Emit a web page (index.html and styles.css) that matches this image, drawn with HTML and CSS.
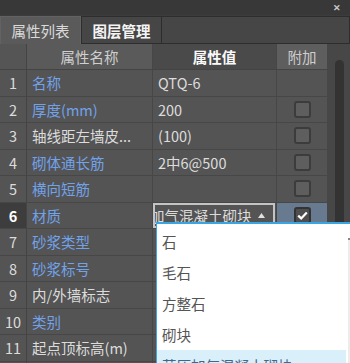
FILE: index.html
```html
<!DOCTYPE html>
<html lang="zh-CN">
<head>
    <meta charset="UTF-8">
    <title>属性列表</title>
    <link rel="stylesheet" href="styles.css">
</head>
<body>
    <div class="panel">
        <div class="titlebar">
            <span class="close">✕</span>
        </div>

        <div class="tabs">
            <div class="tab active">属性列表</div>
            <div class="tab">图层管理</div>
            <div class="tab-rest"></div>
        </div>

        <div class="body">
            <div class="grid">
                <div class="row head">
                    <div class="cell num"></div>
                    <div class="cell name">属性名称</div>
                    <div class="cell value">属性值</div>
                    <div class="cell add">附加</div>
                </div>
                <div class="row">
                    <div class="cell num">1</div>
                    <div class="cell name link">名称</div>
                    <div class="cell value">QTQ-6</div>
                    <div class="cell add"></div>
                </div>
                <div class="row">
                    <div class="cell num">2</div>
                    <div class="cell name link">厚度(mm)</div>
                    <div class="cell value">200</div>
                    <div class="cell add"><span class="check"></span></div>
                </div>
                <div class="row">
                    <div class="cell num">3</div>
                    <div class="cell name">轴线距左墙皮...</div>
                    <div class="cell value">(100)</div>
                    <div class="cell add"><span class="check"></span></div>
                </div>
                <div class="row">
                    <div class="cell num">4</div>
                    <div class="cell name link">砌体通长筋</div>
                    <div class="cell value">2中6@500</div>
                    <div class="cell add"><span class="check"></span></div>
                </div>
                <div class="row">
                    <div class="cell num">5</div>
                    <div class="cell name link">横向短筋</div>
                    <div class="cell value"></div>
                    <div class="cell add"><span class="check"></span></div>
                </div>
                <div class="row current">
                    <div class="cell num">6</div>
                    <div class="cell name link">材质</div>
                    <div class="cell value">
                        <div class="combo">
                            <span class="combo-text">蒸压加气混凝土砌块</span>
                            <svg class="combo-arrow" width="7" height="5" viewBox="0 0 7 5"><path d="M0 5 L3.5 0 L7 5 Z" fill="#e0e0e0"/></svg>
                        </div>
                    </div>
                    <div class="cell add selected">
                        <span class="check on">
                            <svg width="11" height="9" viewBox="0 0 11 9"><path d="M1.2 4.6 L4.2 7.4 L9.8 1.4" fill="none" stroke="#fff" stroke-width="2.2"/></svg>
                        </span>
                    </div>
                </div>
                <div class="row">
                    <div class="cell num">7</div>
                    <div class="cell name link">砂浆类型</div>
                    <div class="cell value"></div>
                    <div class="cell add"></div>
                </div>
                <div class="row">
                    <div class="cell num">8</div>
                    <div class="cell name link">砂浆标号</div>
                    <div class="cell value"></div>
                    <div class="cell add"></div>
                </div>
                <div class="row">
                    <div class="cell num">9</div>
                    <div class="cell name">内/外墙标志</div>
                    <div class="cell value"></div>
                    <div class="cell add"></div>
                </div>
                <div class="row">
                    <div class="cell num">10</div>
                    <div class="cell name link">类别</div>
                    <div class="cell value"></div>
                    <div class="cell add"></div>
                </div>
                <div class="row">
                    <div class="cell num">11</div>
                    <div class="cell name">起点顶标高(m)</div>
                    <div class="cell value"></div>
                    <div class="cell add"></div>
                </div>
                <div class="row">
                    <div class="cell num"></div>
                    <div class="cell name"></div>
                    <div class="cell value"></div>
                    <div class="cell add"></div>
                </div>
            </div>
            <div class="vscroll">
                <div class="thumb"></div>
            </div>

            <!-- dropdown list of the combo in row 6 -->
            <div class="popup">
                <ul class="options">
                    <li>石</li>
                    <li>毛石</li>
                    <li>方整石</li>
                    <li>砌块</li>
                    <li class="hover">蒸压加气混凝土砌块</li>
                </ul>
                <div class="popup-scroll"></div>
            </div>
        </div>
    </div>
</body>
</html>
```

FILE: styles.css
```css
body {
    margin: 0;
    width: 350px;
    height: 363px;
    overflow: hidden;
    background-color: #545454;
    font-family: 'Noto Sans CJK SC', 'Noto Sans', sans-serif;
    font-size: 14.5px;
    color: #dcdcdc;
}
.panel {
    width: 350px;
    height: 363px;
    display: flex;
    flex-direction: column;
}
.titlebar {
    height: 15px;
    background-color: #383838;
    display: flex;
    justify-content: flex-end;
    align-items: center;
    padding-right: 9px;
}
.close {
    font-size: 9px;
    font-weight: bold;
    color: #c8c8c8;
    line-height: 9px;
}
.tabs {
    height: 29px;
    display: flex;
    background-color: #3c3c3c;
    box-sizing: border-box;
    padding-top: 1px;
}
.tab {
    width: 81px;
    box-sizing: border-box;
    display: flex;
    align-items: center;
    justify-content: center;
    background-color: #464646;
    border: 1px solid #2d2d2d;
    color: #f4f4f4;
    font-weight: bold;
    font-size: 14.5px;
}
.tab.active {
    background-color: #5a5a5a;
    border-color: #626262;
    border-bottom: none;
    color: #dadada;
    font-weight: normal;
}
.tab-rest {
    flex: 1;
    background-color: #464646;
    border: 1px solid #2d2d2d;
    border-left: none;
}
.body {
    flex: 1;
    display: flex;
    position: relative;
    overflow: hidden;
}
.grid {
    width: 328px;
}
.row {
    display: grid;
    grid-template-columns: 27px 126px 124px 51px;
    height: 26.5px;
}
.row.head {
    height: 26px;
}
.cell {
    box-sizing: border-box;
    border-right: 1px solid #474747;
    border-bottom: 1px solid #474747;
    display: flex;
    align-items: center;
    padding-left: 5px;
    white-space: nowrap;
    overflow: hidden;
}
.cell.num {
    justify-content: center;
    padding-left: 0;
    border-right-color: #444;
}
.head .cell {
    justify-content: center;
    padding-left: 0;
    background-color: #5a5a5a;
    color: #cfcfcf;
    border-bottom-color: #444;
}
.head .cell.num {
    background-color: #555;
}
.head .cell.value {
    background-color: #4a4a4a;
    color: #fafafa;
    font-weight: bold;
}
.head .cell.add {
    background-color: #5e5e5e;
    color: #cdcdcd;
}
.link {
    color: #72a2ea;
}
.cell.add {
    justify-content: center;
    padding-left: 0;
}
.check {
    width: 17px;
    height: 17px;
    box-sizing: border-box;
    border: 2px solid #3c3c3c;
    border-radius: 3px;
    background-color: #5e5e5e;
    display: flex;
    align-items: center;
    justify-content: center;
}
.check.on {
    background-color: #4e4e4e;
    border-color: #333;
}
.current .cell.num {
    background-color: #3d3d3d;
    color: #fff;
    font-weight: bold;
}
.cell.selected {
    background-color: #687a90;
}
.current .cell.value {
    padding: 0 1px 0 0;
    overflow: visible;
    align-items: stretch;
}
.combo {
    flex: 1;
    box-sizing: border-box;
    border: 2px solid #c4c4c4;
    display: flex;
    align-items: center;
    overflow: hidden;
    padding-right: 8px;
}
.combo-text {
    flex: 1;
    overflow: hidden;
    white-space: nowrap;
    text-indent: -35px;
    padding-left: 1px;
}
.combo-arrow {
    flex: none;
}
.vscroll {
    width: 22px;
    background-color: #474747;
    padding-top: 16px;
    display: flex;
    justify-content: center;
}
.thumb {
    width: 9px;
    height: 400px;
    border-radius: 5px;
    background-color: #333;
}
.popup {
    position: absolute;
    left: 156px;
    top: 178px;
    width: 204px;
    height: 200px;
    background-color: #fff;
    border-top: 2px solid #3aa5e0;
    border-left: 1px solid #3aa5e0;
    display: flex;
}
.options {
    list-style: none;
    margin: 0;
    padding: 2px 0 0;
    width: 189px;
}
.options li {
    height: 31px;
    line-height: 31px;
    padding-left: 5px;
    color: #555;
    white-space: nowrap;
}
.options li.hover {
    background-color: #d9eff9;
    color: #3d6a8c;
}
.popup-scroll {
    margin-left: 2px;
    margin-top: 14px;
    width: 10px;
    background-color: #ececec;
    border-top: 2px solid #888;
}
```
